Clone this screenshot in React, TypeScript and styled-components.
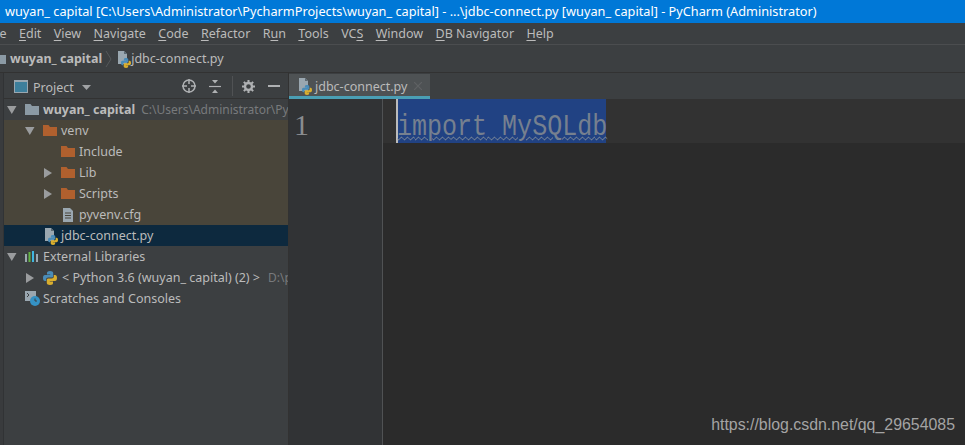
import styled, { createGlobalStyle } from "styled-components";

const GlobalStyle = createGlobalStyle`
  html, body {
    margin: 0;
    padding: 0;
    background: #2b2b2b;
  }
  body {
    width: 965px;
    height: 445px;
    overflow: hidden;
    font-family: "Noto Sans", "Noto Sans CJK SC", sans-serif;
  }
`;

const menuItems: [string, string, string][] = [
  ["", "E", "dit"],
  ["", "V", "iew"],
  ["", "N", "avigate"],
  ["", "C", "ode"],
  ["", "R", "efactor"],
  ["R", "u", "n"],
  ["", "T", "ools"],
  ["VC", "S", ""],
  ["", "W", "indow"],
  ["", "D", "B Navigator"],
  ["", "H", "elp"],
];

function Folder({ color = "#b0602e" }: { color?: string }) {
  return (
    <svg width="14" height="11" viewBox="0 0 14 11">
      <path d="M0 0h5.500l1.500 2h7v9H0z" fill={color} />
    </svg>
  );
}

function PythonLogo({ size = 14 }: { size?: number }) {
  return (
    <svg width={size} height={size} viewBox="0 0 14 14">
      <path d="M7 0C4.500 0 4 1 4 2v1.500h3.200V4H2C.7 4 0 5.200 0 7s.7 3 2 3h1.200V8.400C3.200 7.200 4 6.500 5.200 6.500h3.400c1 0 1.600-.7 1.600-1.600V2C10.200.8 9 0 7 0z" fill="#4a8cb8" />
      <path d="M7 14c2.500 0 3-1 3-2v-1.500H6.800V10H12c1.300 0 2-1.200 2-3s-.7-3-2-3h-1.200v1.600c0 1.200-.8 1.900-2 1.900H5.400c-1 0-1.600.7-1.600 1.600V12C3.800 13.200 5 14 7 14z" fill="#d9ae2e" />
    </svg>
  );
}

function PyFile() {
  return (
    <FileIconWrap>
      <svg width="14" height="15" viewBox="0 0 14 15">
        <path d="M2 1h6l3 3v10H2z" fill="#9aa7b0" />
        <path d="M8 1v3h3z" fill="#5d6a73" />
      </svg>
      <PyBadge>
        <PythonLogo size={10} />
      </PyBadge>
    </FileIconWrap>
  );
}

function Arrow({ open }: { open?: boolean }) {
  return (
    <ArrowSlot>
      <svg width="10" height="10" viewBox="0 0 10 10">
        {open ? <path d="M0 1h9.500L4.800 9z" fill="#9a9c9e" /> : <path d="M1 0l8 5-8 5z" fill="#9a9c9e" />}
      </svg>
    </ArrowSlot>
  );
}

export default function App() {
  return (
    <Page>
      <GlobalStyle />
      <TitleBar>
        wuyan_ capital [C:\Users\Administrator\PycharmProjects\wuyan_ capital] - ...\jdbc-connect.py [wuyan_ capital] - PyCharm (Administrator)
      </TitleBar>
      <MenuBar>
        <MenuItem>File</MenuItem>
        {menuItems.map(([before, key, after]) => (
          <MenuItem key={before + key + after}>
            {before}
            <u>{key}</u>
            {after}
          </MenuItem>
        ))}
      </MenuBar>
      <Breadcrumbs>
        <CrumbFolder>
          <Folder color="#8b9aa5" />
        </CrumbFolder>
        <CrumbRoot>wuyan_ capital</CrumbRoot>
        <svg width="8" height="18" viewBox="0 0 8 18">
          <path d="M1 1l5 8-5 8" fill="none" stroke="#55585a" />
        </svg>
        <PyFile />
        <CrumbFile>jdbc-connect.py</CrumbFile>
      </Breadcrumbs>
      <Main>
        <SideStrip />
        <ProjectPanel>
          <PanelHeader>
            <svg width="14" height="14" viewBox="0 0 14 14">
              <rect x="0.500" y="0.500" width="13" height="12" fill="#3d7f9c" stroke="#9aa7b0" />
              <rect x="0" y="0" width="14" height="2" fill="#9aa7b0" />
            </svg>
            <PanelTitle>Project</PanelTitle>
            <svg width="9" height="5" viewBox="0 0 9 5">
              <path d="M0 0h9L4.500 5z" fill="#a0a2a4" />
            </svg>
            <HeaderTools>
              <svg width="14" height="14" viewBox="0 0 14 14">
                <circle cx="7" cy="7" r="6" fill="none" stroke="#afb1b3" strokeWidth="1.500" />
                <path d="M7 0v5M7 9v5M0 7h5M9 7h5" stroke="#afb1b3" strokeWidth="1.500" />
              </svg>
              <svg width="12" height="13" viewBox="0 0 12 13">
                <path d="M0 6.500h12" stroke="#afb1b3" strokeWidth="1.200" />
                <path d="M3 0h6L6 3.500zM3 13h6L6 9.500z" fill="#afb1b3" />
              </svg>
              <ToolDivider />
              <svg width="13" height="13" viewBox="0 0 14 14">
                <circle cx="7" cy="7" r="3.800" fill="none" stroke="#afb1b3" strokeWidth="2.600" />
                <path d="M7 0v3M7 11v3M0 7h3M11 7h3M2 2l2 2M10 10l2 2M12 2l-2 2M4 10l-2 2" stroke="#afb1b3" strokeWidth="2.200" />
              </svg>
              <svg width="12" height="2" viewBox="0 0 12 2">
                <rect width="12" height="2" fill="#afb1b3" />
              </svg>
            </HeaderTools>
          </PanelHeader>
          <Tree>
            <Row $indent={3}>
              <Arrow open />
              <Folder color="#8b9aa5" />
              <RootName>wuyan_ capital</RootName>
              <PathHint>C:\Users\Administrator\Py</PathHint>
            </Row>
            <Row $indent={21} $tone="venv">
              <Arrow open />
              <Folder />
              <span>venv</span>
            </Row>
            <Row $indent={39} $tone="venv">
              <ArrowSlot />
              <Folder />
              <span>Include</span>
            </Row>
            <Row $indent={39} $tone="venv">
              <Arrow />
              <Folder />
              <span>Lib</span>
            </Row>
            <Row $indent={39} $tone="venv">
              <Arrow />
              <Folder />
              <span>Scripts</span>
            </Row>
            <Row $indent={39} $tone="venv">
              <ArrowSlot />
              <svg width="14" height="14" viewBox="0 0 14 14">
                <path d="M2 0h7l3 3v11H2z" fill="#9aa7b0" />
                <path d="M4 5h6M4 7.500h6M4 10h6" stroke="#49453a" />
              </svg>
              <span>pyvenv.cfg</span>
            </Row>
            <Row $indent={21} $tone="selected">
              <ArrowSlot />
              <PyFile />
              <span>jdbc-connect.py</span>
            </Row>
            <Row $indent={3}>
              <Arrow open />
              <svg width="14" height="11" viewBox="0 0 14 11">
                <path d="M1 3v8" stroke="#9aa7b0" strokeWidth="2" />
                <path d="M4.500 1v10" stroke="#62b543" strokeWidth="2" />
                <path d="M8 0v11" stroke="#40b6e0" strokeWidth="2" />
                <path d="M12 3v8" stroke="#9aa7b0" strokeWidth="2" />
              </svg>
              <span>External Libraries</span>
            </Row>
            <Row $indent={21}>
              <Arrow />
              <PythonLogo />
              <PythonName>&lt; Python 3.6 (wuyan_ capital) (2) &gt;</PythonName>
              <PathHint $wide>D:\p</PathHint>
            </Row>
            <Row $indent={3}>
              <ArrowSlot />
              <svg width="15" height="15" viewBox="0 0 15 15">
                <rect y="0" width="11" height="10" fill="#9aa7b0" />
                <path d="M2 2l2 2-2 2" fill="none" stroke="#3c3f41" />
                <circle cx="10" cy="10" r="5" fill="#3592c4" />
                <path d="M10 7.500V10h2" fill="none" stroke="#3c3f41" />
              </svg>
              <ScratchName>Scratches and Consoles</ScratchName>
            </Row>
          </Tree>
        </ProjectPanel>
        <EditorPane>
          <TabBar>
            <Tab>
              <PyFile />
              <TabName>jdbc-connect.py</TabName>
              <svg width="8" height="8" viewBox="0 0 8 8">
                <path d="M0 0l8 8M8 0L0 8" stroke="#5f6264" strokeWidth="1.200" />
              </svg>
            </Tab>
          </TabBar>
          <EditorBody>
            <Gutter>1</Gutter>
            <CodeArea>
              <CurrentLine>
                <Caret />
                <Selection>
                  <CodeText>import MySQLdb</CodeText>
                </Selection>
              </CurrentLine>
              <Watermark>https://blog.csdn.net/qq_29654085</Watermark>
            </CodeArea>
          </EditorBody>
        </EditorPane>
      </Main>
    </Page>
  );
}

const Page = styled.div`
  width: 965px;
  height: 445px;
  display: flex;
  flex-direction: column;
  overflow: hidden;
  background: #3c3f41;
`;

const TitleBar = styled.div`
  height: 23px;
  flex: none;
  padding-left: 5px;
  background: #0078d7;
  color: #fff;
  font-size: 12.720px;
  line-height: 23px;
  white-space: nowrap;
`;

const MenuBar = styled.div`
  height: 21px;
  flex: none;
  display: flex;
  gap: 12.400px;
  margin-left: -13.400px;
  color: #bbbbbb;
  font-size: 12.500px;
  line-height: 21px;
  white-space: nowrap;
  border-bottom: 1px solid #4b4d4f;
`;

const MenuItem = styled.span`
  u {
    text-underline-offset: 2px;
  }
`;

const Breadcrumbs = styled.div`
  height: 27px;
  flex: none;
  display: flex;
  align-items: center;
  gap: 3px;
  color: #bbbbbb;
  font-size: 12.500px;
  white-space: nowrap;
  border-bottom: 1px solid #323232;
`;

const CrumbFolder = styled.span`
  display: flex;
  margin-left: -8px;
  margin-right: 1px;
`;

const CrumbRoot = styled.span`
  font-weight: 700;
`;

const CrumbFile = styled.span`
  margin-left: -2px;
`;

const Main = styled.div`
  flex: 1;
  display: flex;
  min-height: 0;
`;

const SideStrip = styled.div`
  width: 3px;
  flex: none;
  background: #393b3d;
  border-right: 1px solid #313335;
`;

const ProjectPanel = styled.div`
  width: 284px;
  flex: none;
  display: flex;
  flex-direction: column;
  overflow: hidden;
  border-right: 1px solid #323232;
  color: #bbbbbb;
  font-size: 12.500px;
`;

const PanelHeader = styled.div`
  height: 22px;
  flex: none;
  display: flex;
  align-items: center;
  padding-top: 3px;
  padding-left: 10px;
  gap: 5px;
  border-bottom: 1px solid #323232;
`;

const PanelTitle = styled.span`
  margin-right: 3px;
`;

const HeaderTools = styled.div`
  margin-left: auto;
  margin-right: 8px;
  margin-bottom: 2px;
  display: flex;
  align-items: center;
  gap: 13px;
`;

const ToolDivider = styled.span`
  width: 1px;
  height: 20px;
  margin: 0 -4px 0 -2px;
  background: #505254;
`;

const Tree = styled.div`
  display: flex;
  flex-direction: column;
`;

const Row = styled.div<{ $indent: number; $tone?: "venv" | "selected" }>`
  height: 21px;
  flex: none;
  display: flex;
  align-items: center;
  gap: 4px;
  padding-left: ${(p) => p.$indent}px;
  white-space: nowrap;
  background: ${(p) =>
    p.$tone === "venv" ? "#49453a" : p.$tone === "selected" ? "#0d293e" : "transparent"};

  svg {
    flex: none;
  }
`;

const ArrowSlot = styled.span`
  width: 14px;
  flex: none;
  display: flex;
`;

const RootName = styled.span`
  flex: none;
  font-weight: 700;
`;

const PathHint = styled.span<{ $wide?: boolean }>`
  margin-left: ${(p) => (p.$wide ? "4px" : "2px")};
  color: #787a7c;
  font-size: 12px;
`;

const PythonName = styled.span`
  flex: none;
  margin-left: 1px;
`;

const ScratchName = styled.span`
  margin-left: -1px;
`;

const FileIconWrap = styled.span`
  position: relative;
  width: 14px;
  height: 18px;
  flex: none;
  display: inline-block;
`;

const PyBadge = styled.span`
  position: absolute;
  right: -1px;
  bottom: 0;
  display: flex;
`;

const EditorPane = styled.div`
  flex: 1;
  display: flex;
  flex-direction: column;
  min-width: 0;
`;

const TabBar = styled.div`
  height: 25px;
  flex: none;
  display: flex;
  padding-top: 1px;
  background: #3c3f41;
`;

const Tab = styled.div`
  width: 141px;
  box-sizing: border-box;
  display: flex;
  align-items: center;
  gap: 4px;
  padding-left: 8px;
  padding-top: 2px;
  background: #4e5254;
  border-bottom: 3px solid #4a9fb5;
  color: #bbbbbb;
  font-size: 12.500px;
`;

const TabName = styled.span`
  margin-right: 3px;
`;

const EditorBody = styled.div`
  flex: 1;
  display: flex;
  min-height: 0;
`;

const Gutter = styled.div`
  width: 94px;
  flex: none;
  box-sizing: border-box;
  padding-left: 5px;
  background: #313335;
  border-right: 1px solid #505254;
  color: #8a8d90;
  font-family: "Liberation Serif", serif;
  font-size: 30px;
  line-height: 52px;
`;

const CodeArea = styled.div`
  position: relative;
  flex: 1;
  min-width: 0;
  background: #2b2b2b;
`;

const CurrentLine = styled.div`
  height: 44px;
  display: flex;
  padding-left: 13px;
  background: #323232;
`;

const Caret = styled.span`
  width: 2px;
  flex: none;
  background: #bbbbbb;
`;

const Selection = styled.div`
  width: 208px;
  height: 44px;
  background: #214283;
`;

const CodeText = styled.span`
  display: inline-block;
  margin-left: -1px;
  transform: scaleX(0.834);
  transform-origin: left;
  color: #76808f;
  font-family: "Liberation Mono", monospace;
  font-size: 30px;
  line-height: 56px;
  white-space: nowrap;
  text-decoration: underline wavy #8a9299 1px;
  text-underline-offset: 1px;
`;

const Watermark = styled.div`
  position: absolute;
  right: 10px;
  bottom: 10px;
  color: #a4a4a4;
  font-family: "Liberation Sans", sans-serif;
  font-size: 15.900px;
  line-height: 20px;
`;
